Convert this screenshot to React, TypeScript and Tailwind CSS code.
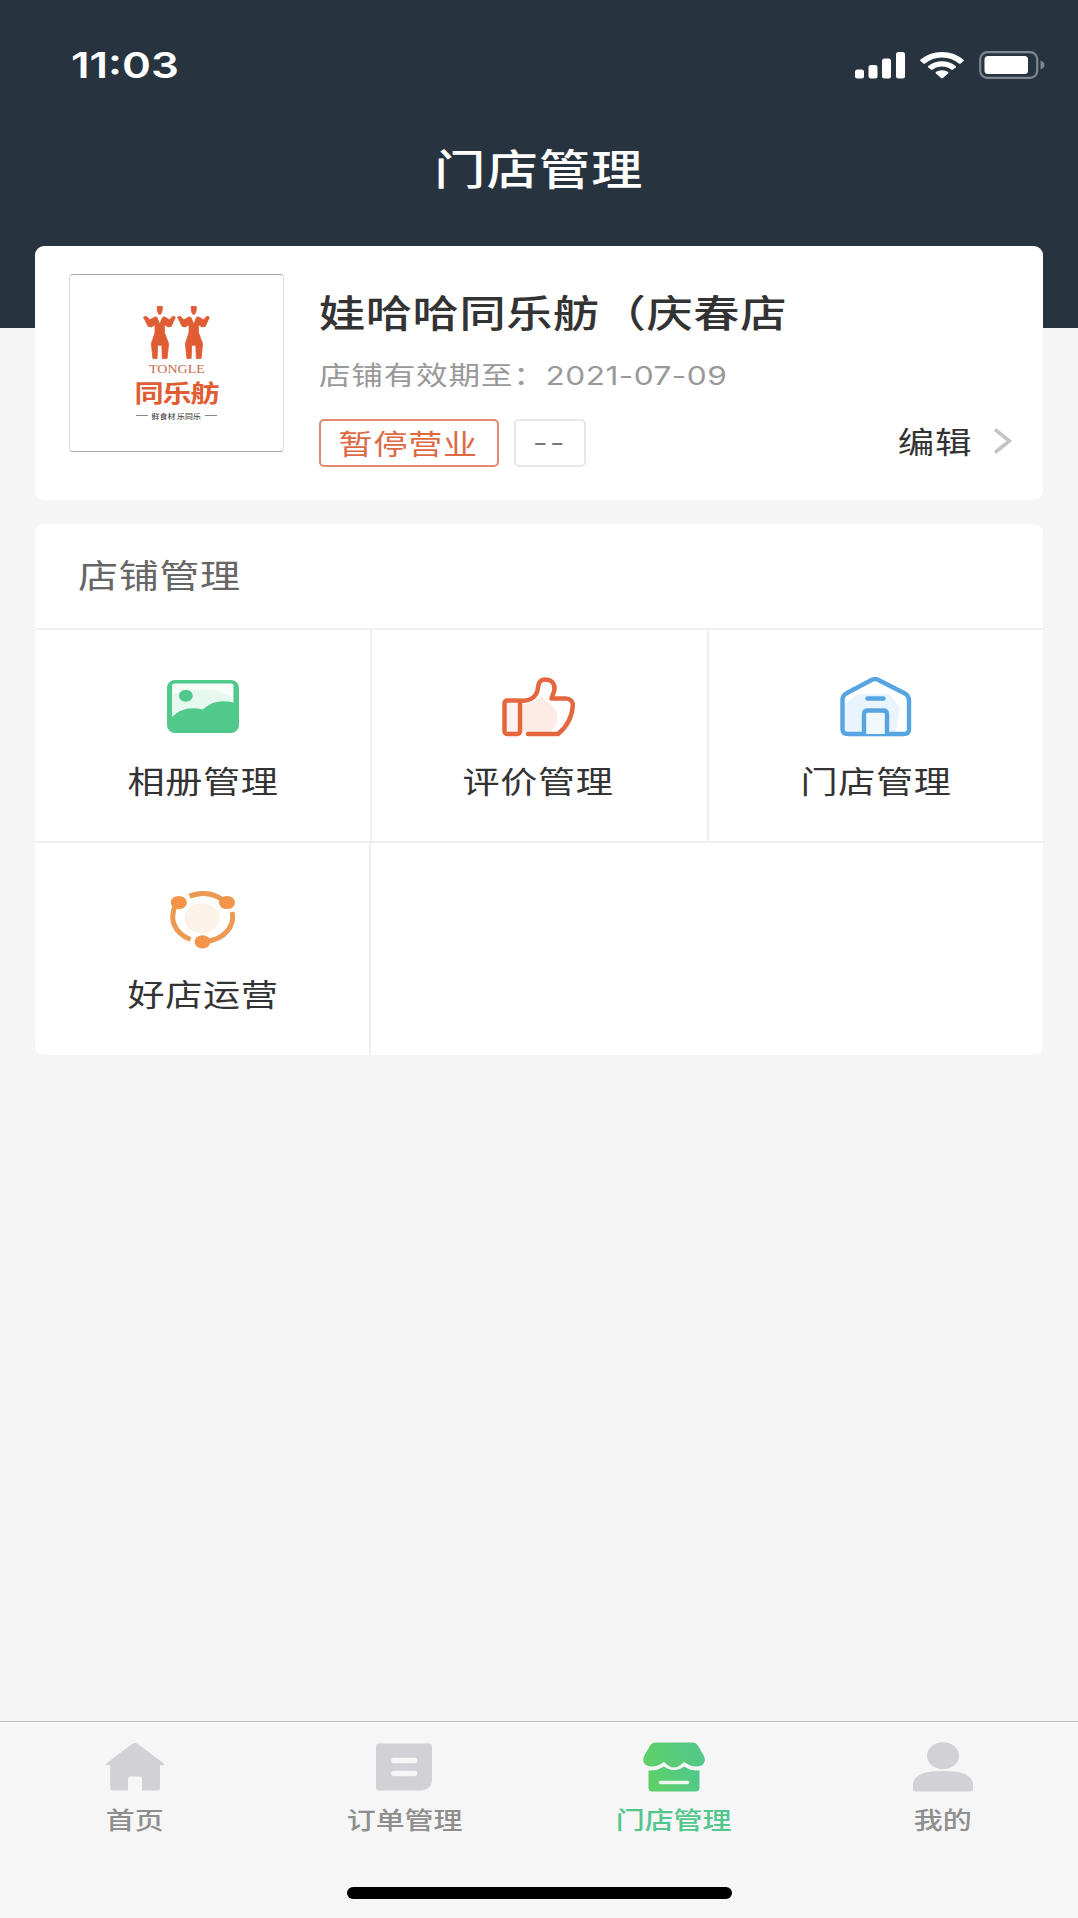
import React, { ReactNode } from 'react';
import { clsx } from 'clsx';

interface MenuItem {
  label: string;
  icon: ReactNode;
}

interface TabItem extends MenuItem {
  active?: boolean;
}

// Wide-set text, used for every label on the page
function Text({ className, children }: { className?: string; children: ReactNode }) {
  return (
    <span className={clsx('inline-block whitespace-nowrap leading-none scale-x-[1.217]', className)}>
      {children}
    </span>
  );
}

function SignalIcon() {
  return (
    <svg width="50" height="27" viewBox="0 0 50 27" fill="#fff">
      <rect x="0" y="17.5" width="9" height="9" rx="2.5" />
      <rect x="13.5" y="13" width="9" height="13.5" rx="2.5" />
      <rect x="27" y="6.5" width="9" height="20" rx="2.5" />
      <rect x="41" y="0" width="9" height="26.5" rx="2.5" />
    </svg>
  );
}

function WifiIcon() {
  return (
    <svg width="44" height="27" viewBox="0 0 44 27" fill="#fff">
      <path d="M22 0C13.500 0 6 3 .6 7.600c-.6.5-.6 1 0 1.500l2.700 2.300c.5.500 1.200.500 1.800 0C9.600 7.700 15.500 5.500 22 5.500s12.400 2.200 16.900 5.900c.6.500 1.300.500 1.800 0l2.700-2.300c.6-.5.6-1 0-1.500C38 3 30.500 0 22 0Z" />
      <path d="M22 9.200c-5.300 0-10.100 1.800-13.700 4.700-.6.500-.6 1 0 1.500l2.700 2.200c.5.500 1.200.500 1.800 0 2.500-1.900 5.700-3 9.200-3s6.700 1.100 9.200 3c.6.500 1.300.500 1.800 0l2.700-2.200c.6-.5.6-1 0-1.500C32.100 11 27.300 9.200 22 9.200Z" />
      <path d="M22 18.200c-2.300 0-4.400.7-6 1.900-.6.500-.6 1 0 1.500l5.100 4.300c.5.500 1.300.500 1.800 0l5.100-4.300c.6-.5.6-1 0-1.500-1.600-1.200-3.700-1.900-6-1.900Z" />
    </svg>
  );
}

function BatteryIcon() {
  return (
    <svg width="67" height="28" viewBox="0 0 67 28" fill="none">
      <rect x="1.200" y="1.200" width="57" height="25.600" rx="7" stroke="#7c8791" strokeWidth="2.200" />
      <rect x="5.500" y="5" width="43.500" height="18" rx="3.500" fill="#fff" />
      <path d="M61.500 9.500c2.400.8 4 2.500 4 4.500s-1.600 3.700-4 4.500Z" fill="#7c8791" />
    </svg>
  );
}

function AlbumIcon() {
  return (
    <svg className="-mt-0.5" width="72" height="53" viewBox="0 0 72 53">
      <rect width="72" height="53" rx="8" fill="#51c98a" />
      <path d="M5 6q0-2.500 3-2.500h55.500q3 0 3 2.500v16.500C54 19.500 44 21.500 36 29.500 25 26.500 13 28.500 5 37Z" fill="#e6f9ef" />
      <path d="M6 4h60v17C64 10 34 6 6 14Z" fill="#fff" opacity=".7" />
      <ellipse cx="18.800" cy="15.800" rx="7" ry="6" fill="#51c98a" />
    </svg>
  );
}

function ThumbIcon() {
  return (
    <svg width="73" height="61" viewBox="0 0 73 61" fill="none" stroke="#e4673f" strokeWidth="4.500" strokeLinecap="round" strokeLinejoin="round">
      <path d="M20 27c8 0 14-3 19-8l9 8c6 4 9 9 7 18l-6 10H20Z" fill="#fdebe6" stroke="none" />
      <rect x="2.500" y="23.500" width="15.500" height="33.500" rx="2.500" fill="#fef3f0" />
      <path d="M18 23.500c10 1 17-3.500 18-13C36.500 5 39 2.500 43 2.500c5.500 0 9.500 3.200 9.500 8.700 0 4-2 6.500-3 10.300h14c5 0 7.500 3 7.300 7C70 41 64.500 50 56 57H26" />
    </svg>
  );
}

function HouseIcon() {
  return (
    <svg width="72" height="60" viewBox="0 0 72 60" fill="none" stroke="#57a4e2" strokeWidth="4.400" strokeLinecap="round" strokeLinejoin="round">
      <path d="M4 27 18 17h32l10 14-4 26H4Z" fill="#e9f4fe" stroke="none" />
      <path d="M7 16 31 3.200q4-2.200 8 0L64 16q5 2.600 5 7.500v29q0 4.500-5.500 4.500h-55Q2.500 57 2.500 52.500v-30Q2.500 18.500 7 16Z" />
      <path d="M24 57V37q0-3.500 4-3.500h15q4 0 4 3.500v20" fill="#eff7ff" />
      <path d="M27.500 21.500h16" />
    </svg>
  );
}

function OperateIcon() {
  return (
    <svg width="66" height="58" viewBox="0 0 66 58" fill="none" stroke="#ea9a52" strokeWidth="5">
      <ellipse cx="32" cy="27.500" rx="17.500" ry="15" fill="#fcf2e7" stroke="none" />
      <path d="M19.500 5.200C31 .8 43 2 53 9" />
      <path d="M62 21C65 34 56 48 36 50.500" />
      <path d="M5.500 14C-1 28 4 42 20.500 48.500" />
      <g fill="#f39448" stroke="none">
        <ellipse cx="8.800" cy="11.500" rx="8" ry="6.600" />
        <ellipse cx="57" cy="11.500" rx="8" ry="6.600" />
        <ellipse cx="32.500" cy="50.800" rx="8" ry="6.600" />
      </g>
    </svg>
  );
}

function HomeTabIcon() {
  return (
    <svg width="60" height="50" viewBox="0 0 60 50" fill="#d1d1d6">
      <path d="M27.500 1.800q2.500-1.800 5 0L58.200 21c1.200 1 .8 2.300-.8 2.300H55V46q0 2.500-2.800 2.500H37V37q0-2.500-2.500-2.500h-9Q23 34.500 23 37v11.500H8Q5.200 48.500 5.200 46V23.300H2.600C1 23.300.6 22 1.800 21Z" />
    </svg>
  );
}

function OrderTabIcon() {
  return (
    <svg width="56" height="50" viewBox="0 0 56 50">
      <path d="M3 1.500h50q3 0 3 3V38c0 6-4.500 10.500-11.500 10.500H3q-3 0-3-3v-41q0-3 3-3Z" fill="#d1d1d6" />
      <path d="M18 18.500h20.500M18 31.500h20.500" stroke="#f6f6f6" strokeWidth="5.600" strokeLinecap="round" />
    </svg>
  );
}

function StoreTabIcon() {
  return (
    <svg width="62" height="50" viewBox="0 0 62 50">
      <defs>
        <linearGradient id="store" x1="0" y1="0.600" x2="1" y2="0.400">
          <stop offset="0" stopColor="#5fd068" />
          <stop offset="1" stopColor="#51c78c" />
        </linearGradient>
      </defs>
      <path d="M13 .5h36q4 0 5.800 3l5.600 9.500c4 7-1 12-7.400 11.500-4.500 0-7-1.500-12-4.500-4 3.500-6 5.500-10 5.500s-6-2-10-5.500c-5 3-7.500 4.500-12 4.500C2 24.500-2 19.500 1.600 13l5.600-9.500Q9 .5 13 .5Z" fill="url(#store)" />
      <path d="M5.500 28.500c6.500.5 11-1.500 15.500-4 3 2 6 3.500 10 3.500s7-1.500 10-3.500c4 2.500 9 4.500 15.500 4V46q0 3.500-4 3.500h-43q-4 0-4-3.500Z" fill="url(#store)" />
      <path d="M17.500 40.500h27" stroke="#ecfaf0" strokeWidth="3.600" strokeLinecap="round" />
    </svg>
  );
}

function MeTabIcon() {
  return (
    <svg width="60" height="50" viewBox="0 0 60 50" fill="#d1d1d6">
      <ellipse cx="30" cy="13.800" rx="16" ry="13.500" />
      <path d="M0 43c0-9 9-14 30-14s30 5 30 14v4.500q0 2-2.500 2h-55q-2.500 0-2.500-2Z" />
    </svg>
  );
}

function DancersLogo() {
  return (
    <svg width="68" height="53" viewBox="0 0 65 52" preserveAspectRatio="none" fill="#e05d33">
      <g id="dancer" stroke="#e05d33" strokeWidth=".8" strokeLinejoin="round">
        <path d="M13.500 .5h5l-.3 4.500-1.200 3h-2l-1.200-3Z" />
        <path d="M.5 11 3 10l3.500 3.500L12 10.500l1.500 1L16 18l2.500-6.500 1.500-1 5.500 3L28.500 10l2.500 1-4 9-3 .5-3.500-2V26l4 11L23 51.500h-4.500L18 38.500h-4l-.5 13h-4L8 37l3.500-11v-7.500l-3.500 2-3-.5Z" />
      </g>
      <use href="#dancer" x="32.500" />
    </svg>
  );
}

const menuItems: MenuItem[] = [
  { label: '相册管理', icon: <AlbumIcon /> },
  { label: '评价管理', icon: <ThumbIcon /> },
  { label: '门店管理', icon: <HouseIcon /> },
  { label: '好店运营', icon: <OperateIcon /> },
];

const tabs: TabItem[] = [
  { label: '首页', icon: <HomeTabIcon /> },
  { label: '订单管理', icon: <OrderTabIcon /> },
  { label: '门店管理', icon: <StoreTabIcon />, active: true },
  { label: '我的', icon: <MeTabIcon /> },
];

function StatusBar() {
  return (
    <div className="flex h-[130px] items-center justify-between pl-[71px] pr-[32px]">
      <Text className="origin-left font-['Inter',sans-serif] text-[36px] font-semibold text-white">11:03</Text>
      <div className="flex items-center">
        <SignalIcon />
        <span className="ml-[15px] mr-[15px]"><WifiIcon /></span>
        <BatteryIcon />
      </div>
    </div>
  );
}

function StoreCard() {
  return (
    <section className="mx-[35px] flex h-[254px] rounded-[9px] bg-white pl-[34px] pr-[31px] pt-7">
      <div className="flex h-[178px] w-[215px] flex-col items-center rounded-[4px] border border-x-[#dcdcdc] border-y-[#a8a8a8] pt-[31px]">
        <DancersLogo />
        <Text className="mt-[5px] font-['Liberation_Serif',serif] text-[11.500px] text-[#c96a4c]">TONGLE</Text>
        <Text className="mt-[4px] text-[24px] font-bold leading-[28px] tracking-[-1px] text-[#e05d33]">同乐舫</Text>
        <div className="mt-[9px] flex items-center gap-[8px]">
          <span className="h-px w-[12px] bg-[#888]" />
          <Text className="text-[6.500px] font-medium text-[#444]">鲜食材 乐同乐</Text>
          <span className="h-px w-[12px] bg-[#888]" />
        </div>
      </div>

      <div className="ml-[35px] flex flex-1 flex-col">
        <Text className="mt-[18px] origin-left self-start text-[38px] font-medium tracking-[0.450px] text-[#333]">娃哈哈同乐舫（庆春店</Text>
        <Text className="mt-[31px] origin-left self-start text-[26px] tracking-[0.600px] text-[#999]">
          店铺有效期至：<span className="font-['Inter',sans-serif] tracking-[0.350px]">2021-07-09</span>
        </Text>
        <div className="mt-[30px] flex items-center">
          <div className="flex h-[48px] w-[180px] items-center justify-center rounded-[5px] border-2 border-[#e08a6e] pb-px pr-px">
            <Text className="text-[28px] tracking-[0.600px] text-[#dd6a45]">暂停营业</Text>
          </div>
          <div className="ml-[15px] flex h-[48px] w-[72px] items-center justify-center rounded-[5px] border-2 border-[#e8e8e8]">
            <Text className="font-['Inter',sans-serif] text-[26px] tracking-[2px] text-[#777]">--</Text>
          </div>
          <div className="-mt-[4px] ml-auto flex items-center">
            <Text className="-mt-0.5 origin-right text-[30px] tracking-[0.600px] text-[#333]">编辑</Text>
            <svg className="ml-[21px]" width="19" height="28" viewBox="0 0 19 28" fill="none" stroke="#c4c4c4" strokeWidth="3.600">
              <path d="M2 2.500 16.500 14 2 25.500" />
            </svg>
          </div>
        </div>
      </div>
    </section>
  );
}

function MenuCard() {
  return (
    <section className="mx-[35px] mt-6 overflow-hidden rounded-[9px] bg-white">
      <div className="flex h-[106px] items-center border-b-2 border-[#f0f0f0] pb-[3px] pl-[43px]">
        <Text className="origin-left text-[33px] tracking-[0.400px] text-[#666]">店铺管理</Text>
      </div>
      <div className="grid grid-cols-3">
        {menuItems.map((item, idx) => (
          <div
            key={item.label}
            className={clsx(
              'flex flex-col items-center border-[#f0f0f0] pt-[41px]',
              idx < 3 ? 'h-[213px] border-b-2' : 'h-[212px] border-r-2 pl-0.5',
              idx === 1 && '-ml-px border-l-2 pr-0.5',
              idx === 2 && 'border-l-2',
            )}
          >
            <div className="flex h-[72px] items-center">{item.icon}</div>
            <Text className="-ml-px mt-[22px] text-[30.500px] tracking-[0.500px] text-[#333]">{item.label}</Text>
          </div>
        ))}
      </div>
    </section>
  );
}

function TabBar() {
  return (
    <nav className="flex h-[197px] flex-col items-center border-t border-[#bdbdbd] bg-[#f6f6f6]">
      <div className="grid w-full grid-cols-4">
        {tabs.map((tab) => (
          <div key={tab.label} className="flex flex-col items-center pt-5">
            {tab.icon}
            <Text className={clsx('mt-[15px] text-[23.800px] font-medium', tab.active ? 'text-[#51c78c]' : 'text-[#8e8e8e]')}>
              {tab.label}
            </Text>
          </div>
        ))}
      </div>
      <div className="mb-[19px] mt-auto h-[12px] w-[385px] rounded-full bg-black" />
    </nav>
  );
}

export default function App() {
  return (
    <div className="flex h-[1918px] w-[1078px] flex-col bg-[#f5f5f5] font-['Noto_Sans_CJK_SC',sans-serif]">
      <header className="h-[328px] shrink-0 bg-[#27333f]">
        <StatusBar />
        <h1 className="flex h-[74px] items-center justify-center">
          <Text className="text-[42px] font-medium tracking-[1px] text-white">门店管理</Text>
        </h1>
      </header>
      <main className="-mt-[82px] flex-1">
        <StoreCard />
        <MenuCard />
      </main>
      <TabBar />
    </div>
  );
}
